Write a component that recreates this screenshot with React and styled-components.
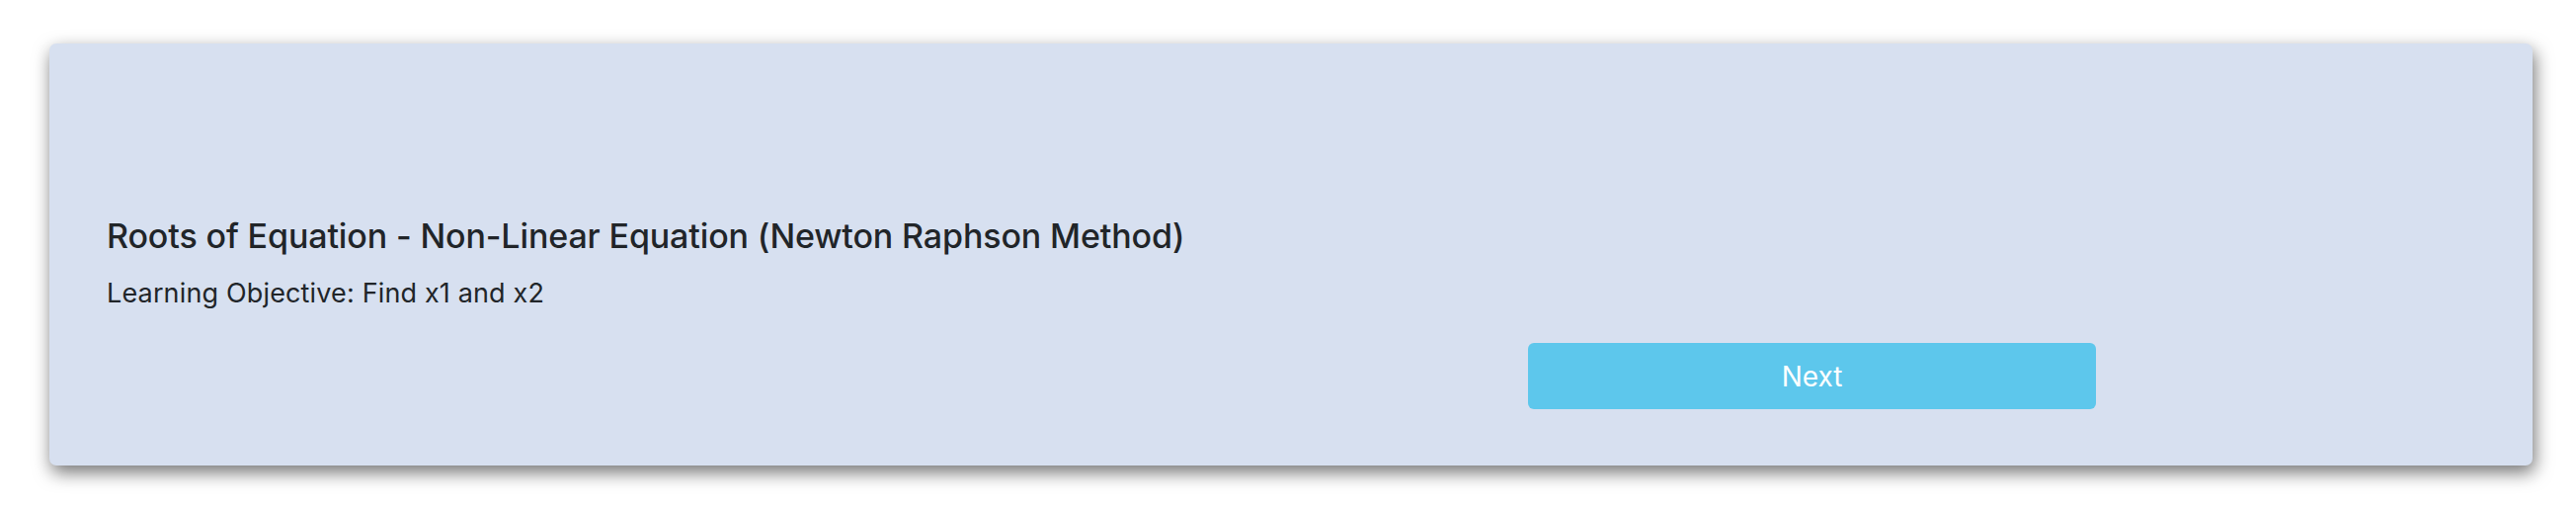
import React from 'react';
import styled, { createGlobalStyle } from 'styled-components';

const GlobalStyle = createGlobalStyle`
  body {
    margin: 0;
    background: #ffffff;
    font-family: Inter, "Noto Sans", sans-serif;
    color: #212529;
  }
`;

const Page = styled.div`
  padding: 44px 44px 43px 50px;
`;

const Card = styled.div`
  background: #d7e0f0;
  border-radius: 7px;
  box-shadow: 2px 7px 18px rgba(0, 0, 0, 0.55);
  height: 427px;
  box-sizing: border-box;
  padding: 175px 58px 0 58px;
`;

const Title = styled.h5`
  margin: 0;
  font-size: 34px;
  line-height: 1.2;
  font-weight: 500;
  letter-spacing: -0.13px;
`;

const Objective = styled.p`
  margin: 17px 0 0;
  font-size: 27px;
  line-height: 1.5;
  font-weight: 400;
  letter-spacing: 0.15px;
`;

const ButtonRow = styled.div`
  display: grid;
  grid-template-columns: 60% 24%;
  margin-top: 30px;
`;

const NextButton = styled.button`
  grid-column: 2;
  height: 67px;
  border: none;
  border-radius: 6px;
  background: ${props => props.color || '#5dc7ec'};
  color: #ffffff;
  font-family: Inter, "Noto Sans", sans-serif;
  font-size: 28px;
  cursor: pointer;
`;

const App = () => {
    return (
        <Page>
            <GlobalStyle />
            <Card>
                <Title>Roots of Equation - Non-Linear Equation (Newton Raphson Method)</Title>
                <Objective>Learning Objective: Find x1 and x2</Objective>
                <ButtonRow>
                    <NextButton>Next</NextButton>
                </ButtonRow>
            </Card>
        </Page>
    );
};

export default App;
